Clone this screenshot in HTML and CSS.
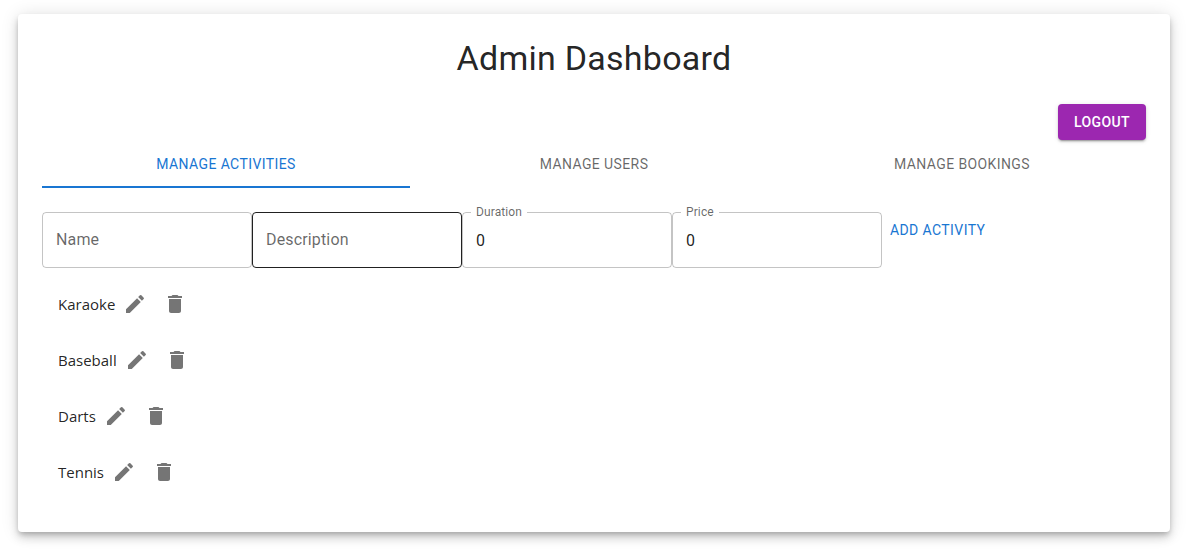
FILE: index.html
```html
<!DOCTYPE html>
<html lang="en">
<head>
  <meta charset="utf-8">
  <title>Admin Dashboard</title>
  <link rel="stylesheet" href="styles.css">
</head>
<body>
  <svg class="sprite" aria-hidden="true">
    <symbol id="icon-edit" viewBox="0 0 24 24"><path d="M3 17.25V21h3.75L17.81 9.94l-3.75-3.75L3 17.25zM20.71 7.04c.39-.39.39-1.02 0-1.41l-2.34-2.34a.9959.9959 0 0 0-1.41 0l-1.83 1.83 3.75 3.75 1.83-1.83z"/></symbol>
    <symbol id="icon-delete" viewBox="0 0 24 24"><path d="M6 19c0 1.1.9 2 2 2h8c1.1 0 2-.9 2-2V7H6v12zM19 4h-3.5l-1-1h-5l-1 1H5v2h14V4z"/></symbol>
  </svg>
  <main class="panel">
    <h1 class="title">Admin Dashboard</h1>
    <div class="actions">
      <button class="button button-filled" type="button">Logout</button>
    </div>
    <div class="tabs" role="tablist">
      <button class="tab tab-selected" type="button" role="tab" aria-selected="true">Manage Activities</button>
      <button class="tab" type="button" role="tab" aria-selected="false">Manage Users</button>
      <button class="tab" type="button" role="tab" aria-selected="false">Manage Bookings</button>
    </div>
    <form class="activity-form">
      <div class="field">
        <input class="field-input" id="name" type="text">
        <label class="field-label" for="name">Name</label>
      </div>
      <div class="field field-active">
        <input class="field-input" id="description" type="text">
        <label class="field-label" for="description">Description</label>
      </div>
      <div class="field">
        <input class="field-input" id="duration" type="number" value="0">
        <label class="field-label field-label-raised" for="duration">Duration</label>
      </div>
      <div class="field">
        <input class="field-input" id="price" type="number" value="0">
        <label class="field-label field-label-raised" for="price">Price</label>
      </div>
      <button class="button button-text" type="button">Add Activity</button>
    </form>
    <ul class="activity-list">
      <li class="activity">
        <span class="activity-name">Karaoke</span>
        <button class="icon-button" type="button" aria-label="Edit Karaoke"><svg class="icon"><use href="#icon-edit"/></svg></button>
        <button class="icon-button" type="button" aria-label="Delete Karaoke"><svg class="icon"><use href="#icon-delete"/></svg></button>
      </li>
      <li class="activity">
        <span class="activity-name">Baseball</span>
        <button class="icon-button" type="button" aria-label="Edit Baseball"><svg class="icon"><use href="#icon-edit"/></svg></button>
        <button class="icon-button" type="button" aria-label="Delete Baseball"><svg class="icon"><use href="#icon-delete"/></svg></button>
      </li>
      <li class="activity">
        <span class="activity-name">Darts</span>
        <button class="icon-button" type="button" aria-label="Edit Darts"><svg class="icon"><use href="#icon-edit"/></svg></button>
        <button class="icon-button" type="button" aria-label="Delete Darts"><svg class="icon"><use href="#icon-delete"/></svg></button>
      </li>
      <li class="activity">
        <span class="activity-name">Tennis</span>
        <button class="icon-button" type="button" aria-label="Edit Tennis"><svg class="icon"><use href="#icon-edit"/></svg></button>
        <button class="icon-button" type="button" aria-label="Delete Tennis"><svg class="icon"><use href="#icon-delete"/></svg></button>
      </li>
    </ul>
  </main>
</body>
</html>
```
FILE: styles.css
```css
* {
  box-sizing: border-box;
}

body {
  margin: 0;
  padding: 14px 22px 26px 18px;
  background: #fff;
  color: rgba(0, 0, 0, 0.87);
  font-family: Roboto, Arial, sans-serif;
  font-size: 16px;
}

.sprite {
  display: none;
}

.panel {
  padding: 24px;
  border-radius: 4px;
  background: #fff;
  box-shadow:
    0 3px 5px -1px rgba(0, 0, 0, 0.2),
    0 6px 10px 0 rgba(0, 0, 0, 0.14),
    0 1px 18px 0 rgba(0, 0, 0, 0.12);
}

.title {
  margin: 0 0 26px;
  font-size: 34px;
  font-weight: 400;
  line-height: 40px;
  letter-spacing: 0.00735em;
  text-align: center;
}

.actions {
  display: flex;
  justify-content: flex-end;
}

.button {
  border: 0;
  border-radius: 4px;
  background: transparent;
  font: 500 14px/24px Roboto, Arial, sans-serif;
  letter-spacing: 0.02857em;
  text-transform: uppercase;
  white-space: nowrap;
}

.button-filled {
  padding: 6px 16px;
  background: #9c27b0;
  color: #fff;
  box-shadow:
    0 3px 1px -2px rgba(0, 0, 0, 0.2),
    0 2px 2px 0 rgba(0, 0, 0, 0.14),
    0 1px 5px 0 rgba(0, 0, 0, 0.12);
}

.button-text {
  padding: 6px 8px;
  color: #1976d2;
  font-weight: 400;
}

.tabs {
  display: grid;
  grid-template-columns: repeat(3, 1fr);
  margin-bottom: 24px;
}

.tab {
  height: 48px;
  padding: 0 16px;
  border: 0;
  background: transparent;
  color: rgba(0, 0, 0, 0.6);
  font: 400 14px/18px Roboto, Arial, sans-serif;
  letter-spacing: 0.02857em;
  text-transform: uppercase;
}

.tab-selected {
  box-shadow: inset 0 -2px #1976d2;
  color: #1976d2;
}

.activity-form {
  display: flex;
  align-items: flex-start;
}

.field {
  position: relative;
  flex: 0 1 210px;
  min-width: 0;
}

.field-input {
  display: block;
  width: 100%;
  height: 56px;
  padding: 16px 13px;
  border: 1px solid rgba(0, 0, 0, 0.23);
  border-radius: 4px;
  outline: 0;
  background: transparent;
  color: rgba(0, 0, 0, 0.87);
  font: 400 16px/24px Roboto, Arial, sans-serif;
  appearance: textfield;
}

.field-active .field-input {
  border-color: rgba(0, 0, 0, 0.87);
}

.field-label {
  position: absolute;
  top: 16px;
  left: 14px;
  color: rgba(0, 0, 0, 0.6);
  line-height: 24px;
  letter-spacing: 0.00938em;
  pointer-events: none;
}

.field-label-raised {
  top: -8px;
  left: 9px;
  padding: 0 5px;
  background: #fff;
  font-size: 12px;
  line-height: 16px;
}

.activity-list {
  margin: 0;
  padding: 8px 0;
  list-style: none;
}

.activity {
  display: flex;
  align-items: center;
  padding: 8px 16px;
}

.activity-name {
  color: rgba(0, 0, 0, 0.87);
  font-family: "Segoe UI", "Open Sans", sans-serif;
  font-size: 15px;
  line-height: 24px;
}

.icon-button {
  display: flex;
  padding: 8px;
  border: 0;
  border-radius: 50%;
  background: transparent;
  color: rgba(0, 0, 0, 0.54);
}

.icon {
  width: 24px;
  height: 24px;
  fill: currentColor;
}
```
